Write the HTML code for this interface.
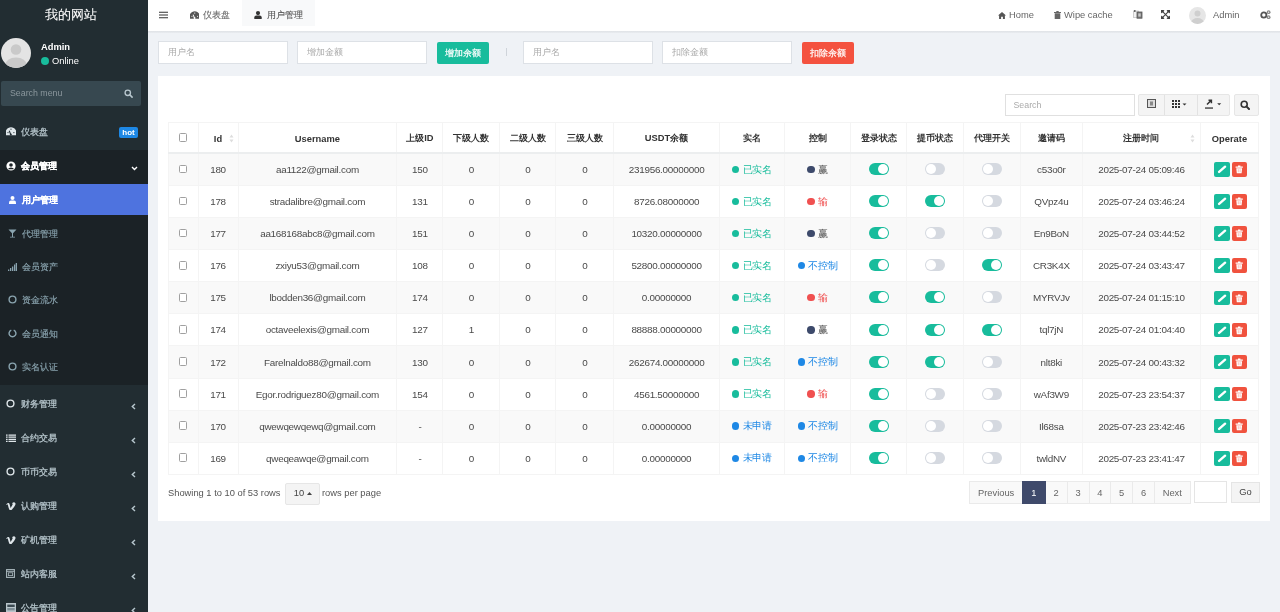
<!DOCTYPE html>
<html><head><meta charset="utf-8">
<style>
*{box-sizing:border-box;margin:0;padding:0}
html,body{width:1280px;height:612px;overflow:hidden}
body{font-family:"Liberation Sans",sans-serif;font-size:9.33px;color:#333;background:#eff2f6;position:relative;will-change:transform}
.abs{position:absolute}
/* sidebar */
#side{position:absolute;left:0;top:0;width:148px;height:612px;background:#222d32;overflow:hidden}
#logo{position:absolute;left:0;top:-1px;width:148px;height:31px;color:#fff;font-size:13.3px;line-height:31px;-webkit-text-stroke:0.05px #fff;padding-left:44.6px;white-space:nowrap}
#avatar{position:absolute;left:1px;top:38px;width:30px;height:30px;border-radius:50%;background:#e4e4e4;overflow:hidden}
#uname{position:absolute;left:41px;top:40.5px;color:#fff;font-weight:bold;font-size:9.33px;line-height:12px}
#uonline{position:absolute;left:41px;top:55px;color:#fff;font-size:9.33px;line-height:12px}
#uonline b{display:inline-block;width:8px;height:8px;border-radius:50%;background:#18bc9c;vertical-align:-1px;margin-right:3px}
#ssearch{position:absolute;left:1px;top:81px;width:140px;height:25px;background:#374850;border-radius:2px;color:#8b979d;font-size:8.8px;line-height:25px;padding-left:9px}
#ssearch svg{position:absolute;right:8px;top:8px}
.mi{position:absolute;left:0;width:148px;height:34px;color:#b8c7ce;font-size:9.33px;line-height:34px;white-space:nowrap}
.mi .ic{position:absolute;left:6px;top:0;height:34px;display:flex;align-items:center}
.mi .tx{position:absolute;left:20.5px;top:0;font-size:9.4px;-webkit-text-stroke:0.25px currentColor}
.mi .chev{position:absolute;left:130.5px;top:2.3px;height:34px;display:flex;align-items:center}
#tree{position:absolute;left:0;top:149.7px;width:148px;height:235.3px;background:#1b2226}
.sub{position:absolute;left:0;width:148px;height:33.5px;color:#8aa4af;line-height:33.5px;white-space:nowrap}
.sub .ic{position:absolute;left:8px;top:0;height:33.5px;display:flex;align-items:center}
.sub .tx{position:absolute;left:22px;top:0;font-size:9.4px;-webkit-text-stroke:0.15px currentColor}
/* header */
#hdr{position:absolute;left:148px;top:0;width:1132px;height:31px;background:#fff}
#hshadow{position:absolute;left:148px;top:31px;width:1132px;height:2.3px;background:linear-gradient(#dfe2e6,#e9ecf0)}
#hdr .it{position:absolute;top:0;height:31px;line-height:30.5px;color:#666;white-space:nowrap}
#tabact{position:absolute;left:93.5px;top:0;width:73px;height:26px;background:#f8f9fa}
/* filter */
.inp{position:absolute;top:41px;height:23px;width:130px;background:#fff;border:1px solid #dde1e6;color:#aaa;font-size:8.7px;line-height:21px;padding-left:9px}
.btn{position:absolute;top:41.5px;height:22.3px;width:52.5px;border-radius:2px;color:#fff;font-size:9px;line-height:22px;text-align:center;-webkit-text-stroke:0.2px #fff}
/* panel */
#panel{position:absolute;left:157.5px;top:75.5px;width:1112px;height:445.5px;background:#fff}
table{position:absolute;left:167.5px;top:122.4px;border-collapse:collapse;table-layout:fixed;width:1090.4px}
th{height:30.5px;font-weight:bold;color:#333;text-align:center;border:1px solid #f4f4f4;border-bottom:2px solid #eceeef;padding:1.6px 0 0 0;white-space:nowrap;position:relative}
td{height:32.1px;text-align:center;color:#4a4a4a;font-size:9.9px;letter-spacing:-0.27px;border:1px solid #f4f4f4;padding:0;white-space:nowrap}
tr.odd td{background:#f9f9f9}
.cb{display:inline-block;width:8.8px;height:8.8px;border:1px solid #a0a0a0;border-radius:1.5px;background:#fff;vertical-align:middle;position:relative;top:-1.5px}
.st{margin-right:0}
.st b{display:inline-block;width:7.3px;height:7.3px;border-radius:50%;vertical-align:-0.6px;margin-right:3.3px}
.st.g{color:#18bc9c}.st.g b{background:#18bc9c}
.st.bl{color:#1e88e5}.st.bl b{background:#1e88e5}
.st.nv{color:#555}.st.nv b{background:#3d4a6b}
.st.rd{color:#f05050}.st.rd b{background:#f05050}
.sw{display:inline-block;width:20px;height:12px;border-radius:6px;position:relative;vertical-align:middle;top:-0.6px}
.sw i{position:absolute;top:1px;width:10px;height:10px;border-radius:50%;background:#fff}
.sw.on{background:#18bc9c}.sw.on i{left:9px}
.sw.off{background:#d5d9e0}.sw.off i{left:1px}
.ab{display:inline-block;width:15.3px;height:14.6px;border-radius:2px;vertical-align:middle;position:relative;left:0.8px}
.ab svg{position:absolute;left:0;top:0}
.ab.ed{background:#18bc9c;margin-right:2.3px;width:15.7px}
.ab.dl{background:#f0523e;width:14.5px}
.sort{position:absolute;top:11px}
/* toolbar */
#tsearch{position:absolute;left:1004.5px;top:94px;width:130.5px;height:22px;border:1px solid #e0e0e0;color:#aaa;font-size:8.8px;line-height:20px;padding-left:8px;background:#fff}
.tb{position:absolute;top:94px;height:22px;background:#f4f4f4;border:1px solid #e6e6e6}
/* pagination */
#showing{position:absolute;left:168px;top:486.8px;line-height:12px;color:#555;white-space:nowrap}
#psize{position:absolute;left:284.8px;top:482.8px;width:35px;height:22px;background:#f4f4f4;border:1px solid #e6e6e6;border-radius:2px;line-height:19px;padding-left:8px;color:#444}
#rpp{position:absolute;left:322px;top:486.8px;line-height:12px;color:#555;white-space:nowrap}
.pg{position:absolute;top:481.25px;height:22.5px;border:1px solid #eaeaea;background:#f9f9f9;color:#666;line-height:22.5px;text-align:center}
.pg.act{background:#3f4a6b;border-color:#3f4a6b;color:#fff;z-index:1}
</style></head><body>

<div id="side">
  <div id="logo">我的网站</div>
  <div id="avatar"><svg width="30" height="30" viewBox="0 0 30 30"><circle cx="15" cy="11.5" r="5.3" fill="#c9c9c9"/><ellipse cx="15" cy="27.5" rx="11" ry="8" fill="#c9c9c9"/></svg></div>
  <div id="uname">Admin</div>
  <div id="uonline"><b></b>Online</div>
  <div id="ssearch">Search menu<svg width="9" height="9" viewBox="0 0 10 10"><circle cx="4.2" cy="4.2" r="3" stroke="#b8c7ce" stroke-width="1.5" fill="none"/><path d="M6.4 6.4L9 9" stroke="#b8c7ce" stroke-width="1.8" stroke-linecap="round"/></svg></div>

  <div class="mi" style="top:114.8px"><span class="ic" style="top:-0.5px"><svg width="10" height="8.5" viewBox="0 0 10 8.5"><path d="M0 8.3A5.56 5.56 0 1 1 10 8.3Z" fill="#dfe6ea"/><path d="M4.8 7.6L3.2 3.8" stroke="#222d32" stroke-width="1.1"/><circle cx="2" cy="5.6" r=".6" fill="#222d32"/><circle cx="5" cy="2.2" r=".6" fill="#222d32"/><circle cx="7.9" cy="5.6" r=".6" fill="#222d32"/><circle cx="4.8" cy="7.4" r="1" fill="#222d32"/></svg></span><span class="tx">仪表盘</span><span style="position:absolute;left:118.8px;top:12.6px;width:19.4px;height:10.7px;background:#1e88e5;border-radius:2px;color:#fff;font-weight:bold;font-size:8px;line-height:11.6px;text-align:center">hot</span></div>

  <div id="tree"></div>
  <div class="mi" style="top:149px;color:#fff;font-weight:bold"><span class="ic"><svg width="10" height="10" viewBox="0 0 10 10"><circle cx="5" cy="5" r="4.6" fill="#fff"/><circle cx="5" cy="4" r="1.8" fill="#1b2226"/><path d="M1.8 8.2A3.6 3 0 0 1 8.2 8.2Z" fill="#1b2226"/></svg></span><span class="tx">会员管理</span><span class="chev"><svg width="7" height="5" viewBox="0 0 7 5"><path d="M1 1L3.5 3.5L6 1" stroke="#fff" stroke-width="1.4" fill="none"/></svg></span></div>

  <div class="sub" style="top:184px;background:#4e73df;color:#fff;height:31px;line-height:32.5px;font-weight:bold"><span class="ic" style="left:9px;height:31px"><svg width="7" height="8" viewBox="0 0 7 8"><circle cx="3.5" cy="2" r="2" fill="#fff"/><path d="M0 8V6.5Q0 4.5 2 4.5H5Q7 4.5 7 6.5V8Z" fill="#fff"/></svg></span><span class="tx">用户管理</span></div>
  <div class="sub" style="top:216.5px"><span class="ic"><svg width="9" height="9" viewBox="0 0 9 9"><path d="M0.5 0.5H8.5L5 4.3V7.8H7V8.5H2V7.8H4V4.3Z" fill="#8aa4af"/></svg></span><span class="tx">代理管理</span></div>
  <div class="sub" style="top:250px"><span class="ic"><svg width="9" height="8" viewBox="0 0 9 8"><rect x="0" y="6.5" width="1.3" height="1.5" fill="#8aa4af"/><rect x="2" y="5" width="1.3" height="3" fill="#8aa4af"/><rect x="4" y="3.5" width="1.3" height="4.5" fill="#8aa4af"/><rect x="6" y="1.5" width="1.3" height="6.5" fill="#8aa4af"/><rect x="7.7" y="0" width="1.3" height="8" fill="#8aa4af"/></svg></span><span class="tx">会员资产</span></div>
  <div class="sub" style="top:283px"><span class="ic"><svg width="9" height="9" viewBox="0 0 9 9"><circle cx="4.5" cy="4.5" r="3.4" stroke="#8aa4af" stroke-width="1.4" fill="none"/></svg></span><span class="tx">资金流水</span></div>
  <div class="sub" style="top:316.5px"><span class="ic"><svg width="9" height="9" viewBox="0 0 9 9"><path d="M3.3 1.2A3.4 3.4 0 1 0 5.7 1.2" stroke="#8aa4af" stroke-width="1.4" fill="none"/></svg></span><span class="tx">会员通知</span></div>
  <div class="sub" style="top:350px"><span class="ic"><svg width="9" height="9" viewBox="0 0 9 9"><circle cx="4.5" cy="4.5" r="3.4" stroke="#8aa4af" stroke-width="1.4" fill="none"/></svg></span><span class="tx">实名认证</span></div>

  <div class="mi" style="top:386.8px"><span class="ic"><svg width="9" height="9" viewBox="0 0 9 9"><circle cx="4.5" cy="4.5" r="3.4" stroke="#dfe6ea" stroke-width="1.4" fill="none"/></svg></span><span class="tx">财务管理</span><span class="chev"><svg width="5" height="7" viewBox="0 0 5 7"><path d="M4 1L1.3 3.5L4 6" stroke="#b8c7ce" stroke-width="1.4" fill="none"/></svg></span></div>
  <div class="mi" style="top:420.8px"><span class="ic"><svg width="10" height="8" viewBox="0 0 10 8"><path d="M0 0.5h1.6v1.2H0zM2.5 0.5H10v1.2H2.5zM0 2.6h1.6v1.2H0zM2.5 2.6H10v1.2H2.5zM0 4.7h1.6v1.2H0zM2.5 4.7H10v1.2H2.5zM0 6.8h1.6V8H0zM2.5 6.8H10V8H2.5z" fill="#dfe6ea"/></svg></span><span class="tx">合约交易</span><span class="chev"><svg width="5" height="7" viewBox="0 0 5 7"><path d="M4 1L1.3 3.5L4 6" stroke="#b8c7ce" stroke-width="1.4" fill="none"/></svg></span></div>
  <div class="mi" style="top:454.8px"><span class="ic"><svg width="9" height="9" viewBox="0 0 9 9"><circle cx="4.5" cy="4.5" r="3.4" stroke="#dfe6ea" stroke-width="1.4" fill="none"/></svg></span><span class="tx">币币交易</span><span class="chev"><svg width="5" height="7" viewBox="0 0 5 7"><path d="M4 1L1.3 3.5L4 6" stroke="#b8c7ce" stroke-width="1.4" fill="none"/></svg></span></div>
  <div class="mi" style="top:488.8px"><span class="ic"><svg width="10" height="8" viewBox="0 0 10 8"><path d="M0.2 2.4Q1.6 0.9 2.8 1.1Q3.5 1.3 3.9 3.2L4.6 6Q6 4 6.6 2.6Q6.9 1.5 6 1.6Q7 0.1 8.6 0.4Q10 0.9 9.4 2.8Q8.3 5.4 5.5 7.9H3.7Q3.1 7.6 2.7 6L1.8 2.7Q1.4 1.9 0.7 2.9Z" fill="#dfe6ea"/></svg></span><span class="tx">认购管理</span><span class="chev"><svg width="5" height="7" viewBox="0 0 5 7"><path d="M4 1L1.3 3.5L4 6" stroke="#b8c7ce" stroke-width="1.4" fill="none"/></svg></span></div>
  <div class="mi" style="top:522.8px"><span class="ic"><svg width="10" height="8" viewBox="0 0 10 8"><path d="M0.2 2.4Q1.6 0.9 2.8 1.1Q3.5 1.3 3.9 3.2L4.6 6Q6 4 6.6 2.6Q6.9 1.5 6 1.6Q7 0.1 8.6 0.4Q10 0.9 9.4 2.8Q8.3 5.4 5.5 7.9H3.7Q3.1 7.6 2.7 6L1.8 2.7Q1.4 1.9 0.7 2.9Z" fill="#dfe6ea"/></svg></span><span class="tx">矿机管理</span><span class="chev"><svg width="5" height="7" viewBox="0 0 5 7"><path d="M4 1L1.3 3.5L4 6" stroke="#b8c7ce" stroke-width="1.4" fill="none"/></svg></span></div>
  <div class="mi" style="top:556.8px"><span class="ic"><svg width="9" height="9" viewBox="0 0 9 9"><rect x="0.6" y="0.6" width="7.8" height="7.8" stroke="#a9b6bc" stroke-width="1.1" fill="none"/><path d="M0.6 2.3h7.8" stroke="#a9b6bc" stroke-width="1"/><rect x="2.4" y="3.8" width="4.2" height="2.8" stroke="#a9b6bc" stroke-width=".8" fill="none"/></svg></span><span class="tx">站内客服</span><span class="chev"><svg width="5" height="7" viewBox="0 0 5 7"><path d="M4 1L1.3 3.5L4 6" stroke="#b8c7ce" stroke-width="1.4" fill="none"/></svg></span></div>
  <div class="mi" style="top:590.8px"><span class="ic"><svg width="10" height="9" viewBox="0 0 10 9"><rect x="0" y="0" width="10" height="9" fill="#b9c5cb"/><rect x="1.3" y="1.6" width="7.4" height="2.4" fill="#3b4a52"/><rect x="1.3" y="5" width="7.4" height="2.4" fill="#7d8d95"/></svg></span><span class="tx">公告管理</span><span class="chev"><svg width="5" height="7" viewBox="0 0 5 7"><path d="M4 1L1.3 3.5L4 6" stroke="#b8c7ce" stroke-width="1.4" fill="none"/></svg></span></div>
</div>

<div id="hshadow"></div>
<div id="hdr">
  <div id="tabact"></div>
  <div class="it" style="left:11px"><svg width="9" height="8" viewBox="0 0 9 8" style="vertical-align:-1px"><path d="M0 1.2h9M0 4h9M0 6.8h9" stroke="#333" stroke-width="1.1"/></svg></div>
  <div class="it" style="left:41.5px;font-size:9.33px;-webkit-text-stroke:0.12px currentColor"><svg width="9.5" height="8" viewBox="0 0 10 8.5" style="vertical-align:-0.5px;margin-right:4px"><path d="M0 8.3A5.56 5.56 0 1 1 10 8.3Z" fill="#555"/><path d="M4.8 7.6L3.2 3.8" stroke="#fff" stroke-width="1.1"/><circle cx="2" cy="5.6" r=".6" fill="#fff"/><circle cx="5" cy="2.2" r=".6" fill="#fff"/><circle cx="7.9" cy="5.6" r=".6" fill="#fff"/><circle cx="4.8" cy="7.4" r="1" fill="#fff"/></svg>仪表盘</div>
  <div class="it" style="left:106px;color:#555;font-size:9.33px;-webkit-text-stroke:0.12px currentColor"><svg width="8" height="8" viewBox="0 0 8 8" style="vertical-align:-1px;margin-right:4.5px"><circle cx="4" cy="2.1" r="2.1" fill="#333"/><path d="M0.3 8V6.6Q0.3 4.6 2.3 4.6H5.7Q7.7 4.6 7.7 6.6V8Z" fill="#333"/></svg>用户管理</div>

  <div class="it" style="left:850px"><svg width="8" height="7" viewBox="0 0 8 7" style="vertical-align:-0.5px;margin-right:3px"><path d="M4 0L8 3.6H6.9V7H4.9V4.8H3.1V7H1.1V3.6H0Z" fill="#555"/></svg>Home</div>
  <div class="it" style="left:906px"><svg width="7" height="8" viewBox="0 0 7 8" style="vertical-align:-1px;margin-right:3px"><path d="M0 1h7v1H0zM2.3 0h2.4v1H2.3zM0.7 2.3h5.6v5.7H0.7z" fill="#666"/></svg>Wipe cache</div>
  <div class="it" style="left:985px"><svg width="10" height="9" viewBox="0 0 10 9" style="vertical-align:-1px"><rect x="0.4" y="1" width="5" height="6.5" fill="#f2f2f2" stroke="#bbb" stroke-width=".7"/><circle cx="1.8" cy="1" r=".9" fill="#555"/><rect x="4" y="2" width="5" height="6.2" fill="#777" stroke="#555" stroke-width=".8"/><rect x="5.3" y="3.4" width="2.4" height="3.2" fill="#fff" opacity=".6"/></svg></div>
  <div class="it" style="left:1013px"><svg width="9" height="9" viewBox="0 0 9 9" style="vertical-align:-1px"><path d="M0 0h3.6L0 3.6zM9 0v3.6L5.4 0zM0 9v-3.6L3.6 9zM9 9h-3.6L9 5.4z" fill="#444"/><path d="M0 0L9 9M9 0L0 9" stroke="#444" stroke-width="1.1"/><circle cx="1.3" cy="1.3" r="1.3" fill="#444"/><circle cx="7.7" cy="1.3" r="1.3" fill="#444"/><circle cx="1.3" cy="7.7" r="1.3" fill="#444"/><circle cx="7.7" cy="7.7" r="1.3" fill="#444"/></svg></div>
  <div class="abs" style="left:1041px;top:7px;width:17px;height:17px;border-radius:50%;background:#e6e6e6;overflow:hidden"><svg width="17" height="17" viewBox="0 0 17 17"><circle cx="8.5" cy="6.5" r="3" fill="#cfcfcf"/><ellipse cx="8.5" cy="16" rx="6.5" ry="5" fill="#cfcfcf"/></svg></div>
  <div class="it" style="left:1065px;color:#666">Admin</div>
  <div class="it" style="left:1112px"><svg width="11" height="9" viewBox="0 0 11 9" style="vertical-align:-1px"><circle cx="3.8" cy="5" r="2.6" stroke="#555" stroke-width="1.8" fill="none"/><circle cx="8.6" cy="2.2" r="1.9" fill="#888"/><circle cx="8.6" cy="7.2" r="1.9" fill="#888"/><circle cx="8.6" cy="2.2" r=".6" fill="#fff"/><circle cx="8.6" cy="7.2" r=".6" fill="#fff"/></svg></div>
</div>

<div class="inp" style="left:158px">用户名</div>
<div class="inp" style="left:297px">增加金额</div>
<div class="btn" style="left:436.5px;background:#18bc9c">增加余额</div>
<div class="abs" style="left:505.5px;top:48px;width:1px;height:8px;background:#cfd4da"></div>
<div class="inp" style="left:523px">用户名</div>
<div class="inp" style="left:662px">扣除金额</div>
<div class="btn" style="left:801.5px;background:#f4523f">扣除余额</div>

<div id="panel"></div>

<div id="tsearch">Search</div>
<div class="tb" style="left:1138px;width:92px;border-radius:2px"></div>
<div class="abs" style="left:1164px;top:95px;width:1px;height:20px;background:#e2e2e2"></div>
<div class="abs" style="left:1196.5px;top:95px;width:1px;height:20px;background:#e2e2e2"></div>
<div class="abs" style="left:1147px;top:99px"><svg width="9" height="9" viewBox="0 0 9 9"><rect x="0.5" y="0.5" width="8" height="8" fill="#ddd" stroke="#555" stroke-width="1"/><rect x="3" y="2.5" width="3" height="4" fill="#888"/></svg></div>
<div class="abs" style="left:1172px;top:100px"><svg width="15" height="8" viewBox="0 0 15 8"><path d="M0 0h2v2H0zM3 0h2v2H3zM6 0h2v2H6zM0 3h2v2H0zM3 3h2v2H3zM6 3h2v2H6zM0 6h2v2H0zM3 6h2v2H3zM6 6h2v2H6z" fill="#333"/><path d="M10.5 3.5h4L12.5 5.5z" fill="#333"/></svg></div>
<div class="abs" style="left:1204.5px;top:98.5px"><svg width="19" height="10" viewBox="0 0 19 10"><path d="M2 5.5L6 1.5M3.5 1.3H6.4V4.2" stroke="#333" stroke-width="1.5" fill="none"/><path d="M0 8.4h8v1.3H0z" fill="#333"/><path d="M12.2 4.3h4l-2 2z" fill="#333"/></svg></div>
<div class="tb" style="left:1233.8px;width:25.3px;border-radius:2px"></div>
<div class="abs" style="left:1239.5px;top:99.5px"><svg width="10" height="10" viewBox="0 0 10 10"><circle cx="4.2" cy="4.2" r="3" stroke="#333" stroke-width="1.6" fill="none"/><path d="M6.4 6.4L9 9" stroke="#333" stroke-width="2" stroke-linecap="round"/></svg></div>

<table>
<colgroup><col style="width:30.00px"><col style="width:40.00px"><col style="width:158.80px"><col style="width:46.20px"><col style="width:56.60px"><col style="width:56.40px"><col style="width:57.60px"><col style="width:106.00px"><col style="width:65.00px"><col style="width:65.90px"><col style="width:56.10px"><col style="width:56.70px"><col style="width:57.10px"><col style="width:62.00px"><col style="width:118.30px"><col style="width:57.70px"></colgroup>
<thead><tr><th><span class="cb"></span></th><th>Id<svg class="sort" style="left:30.5px" width="5" height="9" viewBox="0 0 5 9"><path d="M2.5 0.5L4.5 3.5H0.5z M2.5 8.5L4.5 5.5H0.5z" fill="#ddd"/></svg></th><th>Username</th><th>上级ID</th><th>下级人数</th><th>二级人数</th><th>三级人数</th><th>USDT余额</th><th>实名</th><th>控制</th><th>登录状态</th><th>提币状态</th><th>代理开关</th><th>邀请码</th><th>注册时间<svg class="sort" style="left:107px" width="5" height="9" viewBox="0 0 5 9"><path d="M2.5 0.5L4.5 3.5H0.5z M2.5 8.5L4.5 5.5H0.5z" fill="#ddd"/></svg></th><th>Operate</th></tr></thead>
<tbody>
<tr class="odd"><td><span class="cb"></span></td><td>180</td><td>aa1122@gmail.com</td><td>150</td><td>0</td><td>0</td><td>0</td><td>231956.00000000</td><td><span class="st g"><b></b>已实名</span></td><td><span class="st nv"><b></b>赢</span></td><td><span class="sw on"><i></i></span></td><td><span class="sw off"><i></i></span></td><td><span class="sw off"><i></i></span></td><td>c53o0r</td><td>2025-07-24 05:09:46</td><td><span class="ab ed"><svg viewBox="0 0 15 15" width="15" height="15"><path d="M5.1 9.9L11.1 4.7" stroke="#fff" stroke-width="2.4" stroke-linecap="round"/></svg></span><span class="ab dl"><svg viewBox="0 0 15 15" width="15" height="15"><path d="M3.6 4.6h7.2v1.1H3.6zM6 3.6h2.4v1.2H6zM4.3 6.2h5.8l-.5 5H4.8z" fill="#fff"/><path d="M6.3 7.2v3M8.1 7.2v3" stroke="#f4a59b" stroke-width=".7"/></svg></span></td></tr>
<tr><td><span class="cb"></span></td><td>178</td><td>stradalibre@gmail.com</td><td>131</td><td>0</td><td>0</td><td>0</td><td>8726.08000000</td><td><span class="st g"><b></b>已实名</span></td><td><span class="st rd"><b></b>输</span></td><td><span class="sw on"><i></i></span></td><td><span class="sw on"><i></i></span></td><td><span class="sw off"><i></i></span></td><td>QVpz4u</td><td>2025-07-24 03:46:24</td><td><span class="ab ed"><svg viewBox="0 0 15 15" width="15" height="15"><path d="M5.1 9.9L11.1 4.7" stroke="#fff" stroke-width="2.4" stroke-linecap="round"/></svg></span><span class="ab dl"><svg viewBox="0 0 15 15" width="15" height="15"><path d="M3.6 4.6h7.2v1.1H3.6zM6 3.6h2.4v1.2H6zM4.3 6.2h5.8l-.5 5H4.8z" fill="#fff"/><path d="M6.3 7.2v3M8.1 7.2v3" stroke="#f4a59b" stroke-width=".7"/></svg></span></td></tr>
<tr class="odd"><td><span class="cb"></span></td><td>177</td><td>aa168168abc8@gmail.com</td><td>151</td><td>0</td><td>0</td><td>0</td><td>10320.00000000</td><td><span class="st g"><b></b>已实名</span></td><td><span class="st nv"><b></b>赢</span></td><td><span class="sw on"><i></i></span></td><td><span class="sw off"><i></i></span></td><td><span class="sw off"><i></i></span></td><td>En9BoN</td><td>2025-07-24 03:44:52</td><td><span class="ab ed"><svg viewBox="0 0 15 15" width="15" height="15"><path d="M5.1 9.9L11.1 4.7" stroke="#fff" stroke-width="2.4" stroke-linecap="round"/></svg></span><span class="ab dl"><svg viewBox="0 0 15 15" width="15" height="15"><path d="M3.6 4.6h7.2v1.1H3.6zM6 3.6h2.4v1.2H6zM4.3 6.2h5.8l-.5 5H4.8z" fill="#fff"/><path d="M6.3 7.2v3M8.1 7.2v3" stroke="#f4a59b" stroke-width=".7"/></svg></span></td></tr>
<tr><td><span class="cb"></span></td><td>176</td><td>zxiyu53@gmail.com</td><td>108</td><td>0</td><td>0</td><td>0</td><td>52800.00000000</td><td><span class="st g"><b></b>已实名</span></td><td><span class="st bl"><b></b>不控制</span></td><td><span class="sw on"><i></i></span></td><td><span class="sw off"><i></i></span></td><td><span class="sw on"><i></i></span></td><td>CR3K4X</td><td>2025-07-24 03:43:47</td><td><span class="ab ed"><svg viewBox="0 0 15 15" width="15" height="15"><path d="M5.1 9.9L11.1 4.7" stroke="#fff" stroke-width="2.4" stroke-linecap="round"/></svg></span><span class="ab dl"><svg viewBox="0 0 15 15" width="15" height="15"><path d="M3.6 4.6h7.2v1.1H3.6zM6 3.6h2.4v1.2H6zM4.3 6.2h5.8l-.5 5H4.8z" fill="#fff"/><path d="M6.3 7.2v3M8.1 7.2v3" stroke="#f4a59b" stroke-width=".7"/></svg></span></td></tr>
<tr class="odd"><td><span class="cb"></span></td><td>175</td><td>lbodden36@gmail.com</td><td>174</td><td>0</td><td>0</td><td>0</td><td>0.00000000</td><td><span class="st g"><b></b>已实名</span></td><td><span class="st rd"><b></b>输</span></td><td><span class="sw on"><i></i></span></td><td><span class="sw on"><i></i></span></td><td><span class="sw off"><i></i></span></td><td>MYRVJv</td><td>2025-07-24 01:15:10</td><td><span class="ab ed"><svg viewBox="0 0 15 15" width="15" height="15"><path d="M5.1 9.9L11.1 4.7" stroke="#fff" stroke-width="2.4" stroke-linecap="round"/></svg></span><span class="ab dl"><svg viewBox="0 0 15 15" width="15" height="15"><path d="M3.6 4.6h7.2v1.1H3.6zM6 3.6h2.4v1.2H6zM4.3 6.2h5.8l-.5 5H4.8z" fill="#fff"/><path d="M6.3 7.2v3M8.1 7.2v3" stroke="#f4a59b" stroke-width=".7"/></svg></span></td></tr>
<tr><td><span class="cb"></span></td><td>174</td><td>octaveelexis@gmail.com</td><td>127</td><td>1</td><td>0</td><td>0</td><td>88888.00000000</td><td><span class="st g"><b></b>已实名</span></td><td><span class="st nv"><b></b>赢</span></td><td><span class="sw on"><i></i></span></td><td><span class="sw on"><i></i></span></td><td><span class="sw on"><i></i></span></td><td>tql7jN</td><td>2025-07-24 01:04:40</td><td><span class="ab ed"><svg viewBox="0 0 15 15" width="15" height="15"><path d="M5.1 9.9L11.1 4.7" stroke="#fff" stroke-width="2.4" stroke-linecap="round"/></svg></span><span class="ab dl"><svg viewBox="0 0 15 15" width="15" height="15"><path d="M3.6 4.6h7.2v1.1H3.6zM6 3.6h2.4v1.2H6zM4.3 6.2h5.8l-.5 5H4.8z" fill="#fff"/><path d="M6.3 7.2v3M8.1 7.2v3" stroke="#f4a59b" stroke-width=".7"/></svg></span></td></tr>
<tr class="odd"><td><span class="cb"></span></td><td>172</td><td>Farelnaldo88@gmail.com</td><td>130</td><td>0</td><td>0</td><td>0</td><td>262674.00000000</td><td><span class="st g"><b></b>已实名</span></td><td><span class="st bl"><b></b>不控制</span></td><td><span class="sw on"><i></i></span></td><td><span class="sw on"><i></i></span></td><td><span class="sw off"><i></i></span></td><td>nlt8ki</td><td>2025-07-24 00:43:32</td><td><span class="ab ed"><svg viewBox="0 0 15 15" width="15" height="15"><path d="M5.1 9.9L11.1 4.7" stroke="#fff" stroke-width="2.4" stroke-linecap="round"/></svg></span><span class="ab dl"><svg viewBox="0 0 15 15" width="15" height="15"><path d="M3.6 4.6h7.2v1.1H3.6zM6 3.6h2.4v1.2H6zM4.3 6.2h5.8l-.5 5H4.8z" fill="#fff"/><path d="M6.3 7.2v3M8.1 7.2v3" stroke="#f4a59b" stroke-width=".7"/></svg></span></td></tr>
<tr><td><span class="cb"></span></td><td>171</td><td>Egor.rodriguez80@gmail.com</td><td>154</td><td>0</td><td>0</td><td>0</td><td>4561.50000000</td><td><span class="st g"><b></b>已实名</span></td><td><span class="st rd"><b></b>输</span></td><td><span class="sw on"><i></i></span></td><td><span class="sw off"><i></i></span></td><td><span class="sw off"><i></i></span></td><td>wAf3W9</td><td>2025-07-23 23:54:37</td><td><span class="ab ed"><svg viewBox="0 0 15 15" width="15" height="15"><path d="M5.1 9.9L11.1 4.7" stroke="#fff" stroke-width="2.4" stroke-linecap="round"/></svg></span><span class="ab dl"><svg viewBox="0 0 15 15" width="15" height="15"><path d="M3.6 4.6h7.2v1.1H3.6zM6 3.6h2.4v1.2H6zM4.3 6.2h5.8l-.5 5H4.8z" fill="#fff"/><path d="M6.3 7.2v3M8.1 7.2v3" stroke="#f4a59b" stroke-width=".7"/></svg></span></td></tr>
<tr class="odd"><td><span class="cb"></span></td><td>170</td><td>qwewqewqewq@gmail.com</td><td>-</td><td>0</td><td>0</td><td>0</td><td>0.00000000</td><td><span class="st bl"><b></b>未申请</span></td><td><span class="st bl"><b></b>不控制</span></td><td><span class="sw on"><i></i></span></td><td><span class="sw off"><i></i></span></td><td><span class="sw off"><i></i></span></td><td>Il68sa</td><td>2025-07-23 23:42:46</td><td><span class="ab ed"><svg viewBox="0 0 15 15" width="15" height="15"><path d="M5.1 9.9L11.1 4.7" stroke="#fff" stroke-width="2.4" stroke-linecap="round"/></svg></span><span class="ab dl"><svg viewBox="0 0 15 15" width="15" height="15"><path d="M3.6 4.6h7.2v1.1H3.6zM6 3.6h2.4v1.2H6zM4.3 6.2h5.8l-.5 5H4.8z" fill="#fff"/><path d="M6.3 7.2v3M8.1 7.2v3" stroke="#f4a59b" stroke-width=".7"/></svg></span></td></tr>
<tr><td><span class="cb"></span></td><td>169</td><td>qweqeawqe@gmail.com</td><td>-</td><td>0</td><td>0</td><td>0</td><td>0.00000000</td><td><span class="st bl"><b></b>未申请</span></td><td><span class="st bl"><b></b>不控制</span></td><td><span class="sw on"><i></i></span></td><td><span class="sw off"><i></i></span></td><td><span class="sw off"><i></i></span></td><td>twldNV</td><td>2025-07-23 23:41:47</td><td><span class="ab ed"><svg viewBox="0 0 15 15" width="15" height="15"><path d="M5.1 9.9L11.1 4.7" stroke="#fff" stroke-width="2.4" stroke-linecap="round"/></svg></span><span class="ab dl"><svg viewBox="0 0 15 15" width="15" height="15"><path d="M3.6 4.6h7.2v1.1H3.6zM6 3.6h2.4v1.2H6zM4.3 6.2h5.8l-.5 5H4.8z" fill="#fff"/><path d="M6.3 7.2v3M8.1 7.2v3" stroke="#f4a59b" stroke-width=".7"/></svg></span></td></tr>
</tbody></table>

<div id="showing">Showing 1 to 10 of 53 rows</div>
<div id="psize">10<svg width="5" height="3" viewBox="0 0 5 3" style="vertical-align:1px;margin-left:3px"><path d="M0 3L2.5 0L5 3z" fill="#444"/></svg></div>
<div id="rpp">rows per page</div>

<div class="pg" style="left:969.25px;width:53.75px">Previous</div>
<div class="pg act" style="left:1022px;width:23.75px">1</div>
<div class="pg" style="left:1044.75px;width:22.75px">2</div>
<div class="pg" style="left:1066.5px;width:23.00px">3</div>
<div class="pg" style="left:1088.5px;width:22.75px">4</div>
<div class="pg" style="left:1110.25px;width:22.75px">5</div>
<div class="pg" style="left:1132px;width:23.00px">6</div>
<div class="pg" style="left:1154px;width:36.50px">Next</div>
<div class="abs" style="left:1194.3px;top:481.3px;width:33.2px;height:22px;border:1px solid #e5e5e5;background:#fff"></div>
<div class="abs" style="left:1231.3px;top:482px;width:28.3px;height:21.3px;border:1px solid #e5e5e5;background:#f4f4f4;color:#444;text-align:center;line-height:19.5px">Go</div>

</body></html>
